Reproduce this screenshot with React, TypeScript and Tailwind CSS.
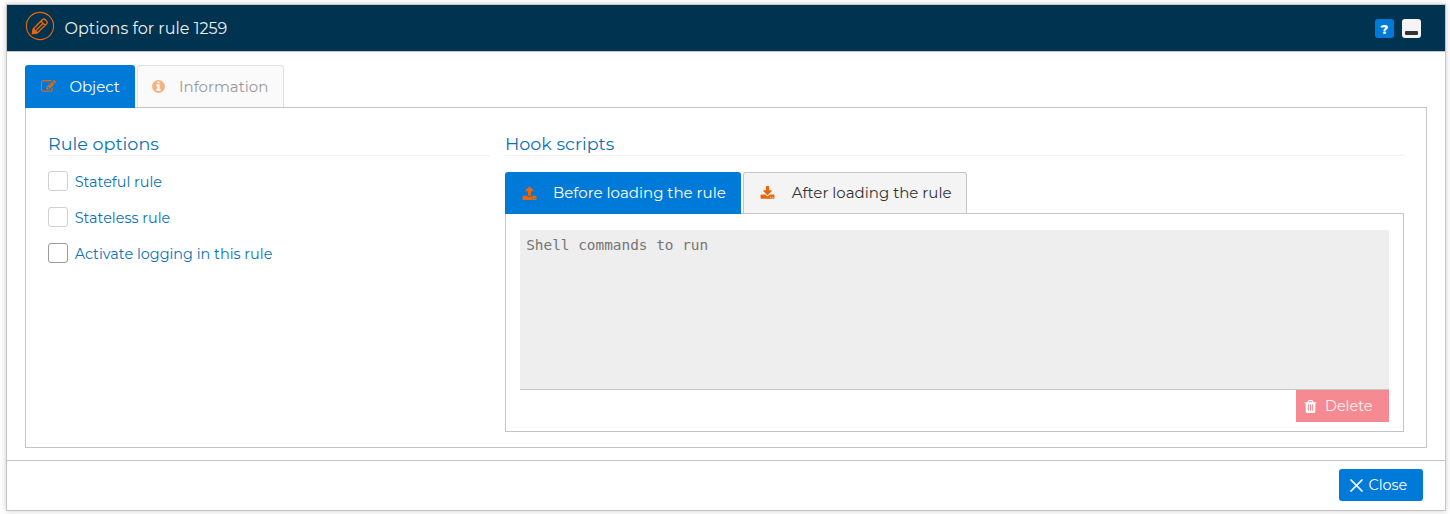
import type { ReactNode } from "react";

const UPLOAD =
  "M1344 1472q0-26-19-45t-45-19-45 19-19 45 19 45 45 19 45-19 19-45zm256 0q0-26-19-45t-45-19-45 19-19 45 19 45 45 19 45-19 19-45zm128-224v320q0 40-28 68t-68 28h-1472q-40 0-68-28t-28-68v-320q0-40 28-68t68-28h427q21 56 70.5 92t110.5 36h256q61 0 110.5-36t70.5-92h427q40 0 68 28t28 68zm-325-648q-17 40-59 40h-256v448q0 26-19 45t-45 19h-256q-26 0-45-19t-19-45v-448h-256q-42 0-59-40-17-39 14-69l448-448q18-19 45-19t45 19l448 448q31 30 14 69z";
const DOWNLOAD =
  "M1344 1344q0-26-19-45t-45-19-45 19-19 45 19 45 45 19 45-19 19-45zm256 0q0-26-19-45t-45-19-45 19-19 45 19 45 45 19 45-19 19-45zm128-224v320q0 40-28 68t-68 28h-1472q-40 0-68-28t-28-68v-320q0-40 28-68t68-28h465l135 136q58 56 136 56t136-56l136-136h464q40 0 68 28t28 68zm-325-569q17 41-14 70l-448 448q-18 19-45 19t-45-19l-448-448q-31-29-14-70 17-39 59-39h256v-448q0-26 19-45t45-19h256q26 0 45 19t19 45v448h256q42 0 59 39z";
const INFO =
  "M1152 1376v-160q0-14-9-23t-23-9h-96v-512q0-14-9-23t-23-9h-320q-14 0-23 9t-9 23v160q0 14 9 23t23 9h96v320h-96q-14 0-23 9t-9 23v160q0 14 9 23t23 9h448q14 0 23-9t9-23zm-128-896v-160q0-14-9-23t-23-9h-192q-14 0-23 9t-9 23v160q0 14 9 23t23 9h192q14 0 23-9t9-23zm640 416q0 209-103 385.5t-279.5 279.5-385.5 103-385.5-103-279.5-279.5-103-385.5 103-385.5 279.5-279.5 385.5-103 385.5 103 279.5 279.5 103 385.5z";
const TRASH =
  "M704 1376v-704q0-14-9-23t-23-9h-64q-14 0-23 9t-9 23v704q0 14 9 23t23 9h64q14 0 23-9t9-23zm256 0v-704q0-14-9-23t-23-9h-64q-14 0-23 9t-9 23v704q0 14 9 23t23 9h64q14 0 23-9t9-23zm256 0v-704q0-14-9-23t-23-9h-64q-14 0-23 9t-9 23v704q0 14 9 23t23 9h64q14 0 23-9t9-23zm-544-992h448l-48-117q-7-9-17-11h-317q-10 2-17 11zm928 32v64q0 14-9 23t-23 9h-96v948q0 83-47 143.5t-113 60.5h-832q-66 0-113-58.5t-47-141.5v-952h-96q-14 0-23-9t-9-23v-64q0-14 9-23t23-9h309l70-167q15-37 54-63t79-26h320q40 0 79 26t54 63l70 167h309q14 0 23 9t9 23z";
const EDIT =
  "M888 1184l116-116-152-152-116 116v56h96v96h56zm440-720q-16-16-33 1l-350 350q-17 17-1 33t33-1l350-350q17-17 1-33zm80 594v190q0 119-84.5 203.5t-203.5 84.5h-832q-119 0-203.5-84.5t-84.5-203.5v-832q0-119 84.5-203.5t203.5-84.5h832q63 0 117 25 15 7 18 23 3 17-9 29l-49 49q-14 14-32 8-23-6-45-6h-832q-66 0-113 47t-47 113v832q0 66 47 113t113 47h832q66 0 113-47t47-113v-126q0-13 9-22l64-64q15-15 35-7t20 29zm-96-738l288 288-672 672h-288v-288zm444 132l-92 92-288-288 92-92q28-28 68-28t68 28l152 152q28 28 28 68t-28 68z";

function Icon({ d, className = "size-[15px]" }: { d: string; className?: string }) {
  return (
    <svg viewBox="0 0 1792 1792" fill="currentColor" className={`shrink-0 ${className}`}>
      <path d={d} />
    </svg>
  );
}

function CheckRow({ label, active }: { label: string; active?: boolean }) {
  return (
    <label className="flex h-9 items-center gap-[6.7px] text-[#0c72b5]">
      <span className={`size-5 shrink-0 rounded-[3px] border bg-white ${active ? "border-[#9a9a9a]" : "border-[#d0d0d0]"}`} />
      <span className="whitespace-nowrap pt-0.5 text-[14.4px] leading-5">{label}</span>
    </label>
  );
}

function Heading({ children }: { children: ReactNode }) {
  return (
    <h2 className="h-[23px] whitespace-nowrap border-b border-[#f2f2f2] text-[17.6px] leading-[22px] text-[#0c72b5]">
      {children}
    </h2>
  );
}

export default function App() {
  return (
    <div className="h-[514px] overflow-hidden bg-white pl-1.5 pt-1 font-['Montserrat','Inter',sans-serif]">
      <div className="flex h-[507px] w-[1440px] flex-col border border-[#c5c5c5] bg-white shadow-[0_0_6px_rgba(0,0,0,0.2)]">
        <header className="flex h-[47px] shrink-0 items-center border-b border-[#c5c5c5] bg-[#003350] pl-[18px] pr-6 text-[#eaf0f4]">
          <svg viewBox="0 0 30 30" className="-mt-1 size-[30px] shrink-0 text-[#ec6608]" fill="none" stroke="currentColor">
            <circle cx="15" cy="15" r="13.6" strokeWidth="1.1" />
            <path
              d="M7.8 22.3l.9-4.8 8.8-8.9q1.3-1.1 2.6 0l1.6 1.6q1.1 1.3 0 2.6l-8.9 8.6zM16 10.2l4.2 4.2M11.1 19.3l6.6-6.6"
              strokeWidth="1.4"
              strokeLinejoin="round"
            />
            <path d="M7.1 22.9l1.1-5.6 4.6 4.6z" fill="currentColor" />
          </svg>
          <h1 className="ml-[9.5px] whitespace-nowrap pt-0.5 text-[16px] leading-5">Options for rule 1259</h1>
          <div className="ml-auto flex gap-2">
            <button className="flex size-[19px] items-center justify-center rounded-[3px] bg-[#007ad9] pt-0.5 text-[13px] font-extrabold leading-none text-white">?</button>
            <button className="flex size-[19px] items-end justify-center rounded-[3px] bg-[#f4f4f4] pb-[3px]">
              <span className="h-1 w-[13px] rounded-[1px] bg-[#333333]" />
            </button>
          </div>
        </header>

        <main className="h-[408px] shrink-0 px-[18px] pt-[13px]">
          <div className="flex h-[42px] items-start gap-0.5 text-[15px] leading-5">
            <button className="z-10 flex h-[43px] w-[110px] items-center rounded-t-[3px] bg-[#007ad9] pl-4 text-white">
              <Icon d={EDIT} className="size-[15px] text-[#ec6608]" />
              <span className="ml-[13.4px] whitespace-nowrap">Object</span>
            </button>
            <button className="flex h-[42px] w-[147px] items-center rounded-t-[3px] border border-b-0 border-[#e2e2e2] bg-[#fafafa] pl-[13px] text-[#999999]">
              <Icon d={INFO} className="size-[15px] text-[#f5b284]" />
              <span className="ml-[13px] whitespace-nowrap">Information</span>
            </button>
          </div>
          <div className="flex h-[341px] gap-[15px] border border-[#c5c5c5] pl-[22px] pr-[22px] pt-[25px]">
            <section className="w-[442px] shrink-0">
              <Heading>Rule options</Heading>
              <div className="mt-[7px]">
                <CheckRow label="Stateful rule" />
                <CheckRow label="Stateless rule" />
                <CheckRow label="Activate logging in this rule" active />
              </div>
            </section>
            <section className="min-w-0 flex-1">
              <Heading>Hook scripts</Heading>
              <div className="mt-4 flex h-[41px] gap-0.5 text-[15px] leading-5">
                <button className="z-10 flex h-[42px] w-[236px] items-center rounded-t-[3px] bg-[#007ad9] pl-[17px] text-white">
                  <Icon d={UPLOAD} className="size-[15px] text-[#ec6608]" />
                  <span className="ml-4 whitespace-nowrap">Before loading the rule</span>
                </button>
                <button className="flex w-[224px] items-center rounded-t-[3px] border border-b-0 border-[#c5c5c5] bg-[#f4f4f4] pl-4 text-[#333333]">
                  <Icon d={DOWNLOAD} className="size-[15px] text-[#ec6608]" />
                  <span className="ml-[16.7px] whitespace-nowrap">After loading the rule</span>
                </button>
              </div>
              <div className="flex h-[219px] flex-col items-end border border-[#c5c5c5] px-[14px] pt-4">
                <div className="h-[160px] w-full border-b border-[#c5c5c5] bg-[#eeeeee] pl-[6.2px] pt-[5px] font-['DejaVu_Sans_Mono',monospace] text-[14.4px] leading-5 text-[#757575]">
                  Shell commands to run
                </div>
                <button className="flex h-8 w-[93px] items-center bg-[#f58a92] pl-[6.5px] text-white">
                  <Icon d={TRASH} className="size-[15px]" />
                  <span className="ml-[7.5px] text-[14.4px] leading-5 text-white/90">Delete</span>
                </button>
              </div>
            </section>
          </div>
        </main>

        <footer className="mt-auto flex h-[50px] shrink-0 justify-end border-t border-[#c5c5c5] pr-[22px] pt-2">
          <button className="flex h-8 w-[84px] items-center rounded-[3px] bg-[#007ad9] pl-[11px] text-white">
            <svg viewBox="0 0 13 13" className="size-[13px]" fill="none" stroke="currentColor" strokeWidth="1.7" strokeLinecap="round">
              <path d="M1 1l11 11M12 1L1 12" />
            </svg>
            <span className="ml-[5.5px] text-[14.4px] leading-5">Close</span>
          </button>
        </footer>
      </div>
    </div>
  );
}
